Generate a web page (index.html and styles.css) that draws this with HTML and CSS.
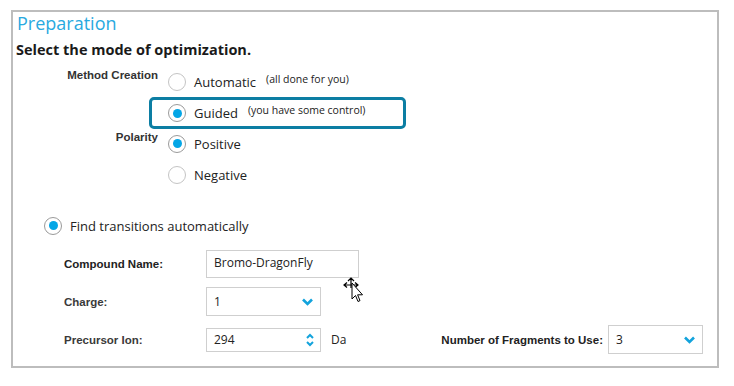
FILE: index.html
```html
<!DOCTYPE html>
<html lang="en">
<head>
  <meta charset="UTF-8" />
  <title>Preparation</title>
  <link rel="stylesheet" href="styles.css">
</head>
<body>
  <div class="panel">
    <h2 class="title">Preparation</h2>
    <h3 class="subtitle">Select the mode of optimization.</h3>

    <div class="group first">
      <div class="group-label">Method Creation</div>
      <div class="options">
        <div class="option">
          <span class="radio"></span>
          <span class="option-text">Automatic</span>
          <span class="hint">(all done for you)</span>
        </div>
        <div class="option highlight">
          <span class="radio checked"></span>
          <span class="option-text">Guided</span>
          <span class="hint">(you have some control)</span>
        </div>
      </div>
    </div>

    <div class="group second">
      <div class="group-label">Polarity</div>
      <div class="options">
        <div class="option">
          <span class="radio checked"></span>
          <span class="option-text">Positive</span>
        </div>
        <div class="option">
          <span class="radio"></span>
          <span class="option-text">Negative</span>
        </div>
      </div>
    </div>

    <div class="option find">
      <span class="radio checked"></span>
      <span class="option-text">Find transitions automatically</span>
    </div>

    <div class="form">
      <div class="form-row">
        <label class="form-label">Compound Name:</label>
        <div class="field name-field">Bromo-DragonFly</div>
      </div>
      <div class="form-row">
        <label class="form-label light">Charge:</label>
        <div class="field select-field">
          <span>1</span>
          <svg class="chevron" width="11" height="8" viewBox="0 0 11 8"><path d="M1 1.5 L5.5 6 L10 1.5" fill="none" stroke="#13a3dc" stroke-width="2.6"/></svg>
        </div>
      </div>
      <div class="form-row last">
        <label class="form-label light">Precursor Ion:</label>
        <div class="field spin-field">
          <span>294</span>
          <svg class="spinner" width="8" height="14" viewBox="0 0 8 14"><path d="M1 5 L4 2 L7 5 M1 9 L4 12 L7 9" fill="none" stroke="#13a3dc" stroke-width="2"/></svg>
        </div>
        <span class="unit">Da</span>
        <label class="form-label frag-label">Number of Fragments to Use:</label>
        <div class="field select-field frag-field">
          <span>3</span>
          <svg class="chevron" width="11" height="8" viewBox="0 0 11 8"><path d="M1 1.5 L5.5 6 L10 1.5" fill="none" stroke="#13a3dc" stroke-width="2.6"/></svg>
        </div>
      </div>
    </div>

    <svg class="cursor" width="24" height="28" viewBox="0 0 24 28">
      <path d="M9 1 L9 11 M6 4 L9 1 L12 4 M2 8 L16 8 M5 5.5 L2 8 L5 10.5 M13 5.5 L16 8 L13 10.5" fill="none" stroke="#000" stroke-width="1.2"/>
      <path d="M10 6 L10 22 L13.5 18.5 L16 24.5 L18 23.6 L15.6 17.8 L20.5 17.8 Z" fill="#fff" stroke="#000" stroke-width="1"/>
    </svg>
  </div>
</body>
</html>
```

FILE: styles.css
```css
body {
  margin: 0;
  background-color: #ffffff;
  color: #222;
  font-family: "Open Sans", sans-serif;
}

.panel {
  position: relative;
  margin: 10px 0 0 11px;
  width: 704px;
  height: 354px;
  border: 2px solid #bdbdbd;
}

.title {
  margin: 0;
  padding: 0 0 0 4px;
  font-size: 18px;
  font-weight: normal;
  line-height: 22px;
  color: #29a9e0;
}

.subtitle {
  margin: 6px 0 0 3px;
  font-size: 14.5px;
  font-weight: bold;
  line-height: 20px;
  color: #1a1a1a;
}

.group {
  display: flex;
}

.group.first {
  margin-top: 6px;
}

.group.second {
  margin-top: -1px;
}

.group-label {
  width: 145px;
  text-align: right;
  font-family: "Liberation Sans", Arial, sans-serif;
  font-size: 11.5px;
  font-weight: bold;
  color: #333;
  padding-top: 3px;
}

.options {
  display: flex;
  flex-direction: column;
  margin-left: 10px;
}

.option {
  display: flex;
  align-items: center;
  height: 31px;
}

.option-text {
  margin-left: 8px;
  font-size: 13px;
  color: #222;
}

.hint {
  margin-left: 10px;
  margin-top: -6px;
  font-size: 10.5px;
  color: #222;
}

.highlight {
  width: 235px;
  height: 26px;
  margin-left: -19px;
  padding-left: 16px;
  border: 3px solid #0c7ea3;
  border-radius: 5px;
}

.radio {
  width: 16px;
  height: 16px;
  border: 1px solid #c4c4c4;
  border-radius: 50%;
  background-color: #fff;
  box-sizing: content-box;
  display: flex;
  align-items: center;
  justify-content: center;
  flex-shrink: 0;
}

.radio.checked {
  border-color: #9a9a9a;
}

.radio.checked::after {
  content: "";
  width: 9px;
  height: 9px;
  border-radius: 50%;
  background-color: #04a6e6;
}

.find {
  margin: 20px 0 0 31px;
}

.form {
  margin: 9px 0 0 51px;
}

.form-row {
  display: flex;
  align-items: center;
  margin-bottom: 9px;
}

.form-label {
  width: 142px;
  font-family: "Liberation Sans", Arial, sans-serif;
  font-size: 11.5px;
  font-weight: bold;
  color: #222;
}

.form-label.light {
  color: #3a3a3a;
}

.field {
  display: flex;
  align-items: center;
  justify-content: space-between;
  box-sizing: border-box;
  border: 1px solid #cfcfcf;
  padding: 0 7px 0 7px;
  font-size: 12px;
  color: #222;
}

.name-field {
  width: 153px;
  height: 28px;
  align-items: flex-start;
  padding-top: 3px;
}

.select-field {
  width: 115px;
  height: 29px;
}

.spin-field {
  width: 115px;
  height: 24px;
  padding-right: 6px;
}

.unit {
  margin-left: 10px;
  font-size: 12px;
  color: #222;
}

.frag-label {
  width: auto;
  margin-left: auto;
  margin-right: 5px;
}

.frag-field {
  width: 95px;
  margin-right: 14px;
}

.cursor {
  position: absolute;
  left: 329px;
  top: 265px;
}
```
